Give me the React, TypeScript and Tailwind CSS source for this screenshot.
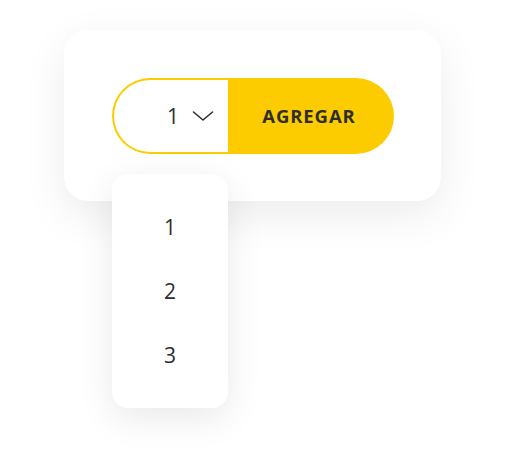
import { useState } from 'react'

const QUANTITIES = [1, 2, 3]

export default function App() {
  const [qty, setQty] = useState(1)

  return (
    <div className="min-h-[474px] w-[506px] bg-white pl-[64px] pt-[30px] font-['Open_Sans',sans-serif] text-[#2e2e2e]">
      <div className="relative h-[171px] w-[377px] rounded-[24px] bg-white pl-[48px] pt-[48px] shadow-[0_14px_44px_rgba(0,0,0,0.08)]">
        <div className="flex h-[76px] w-[282px]">
          <button
            type="button"
            className="flex w-[116px] items-center justify-end gap-[13px] rounded-l-full border-2 border-r-0 border-[#fccc00] bg-white pr-[14px]"
          >
            <span className="text-[21px] leading-none">{qty}</span>
            <svg
              viewBox="0 0 22 12"
              fill="none"
              stroke="#2e2e2e"
              strokeWidth="1.6"
              strokeLinecap="round"
              strokeLinejoin="round"
              className="h-[12px] w-[22px]"
              aria-hidden="true"
            >
              <polyline points="1.5,2 11,10 20.5,2" />
            </svg>
          </button>
          <button
            type="button"
            className="flex flex-1 items-center justify-center rounded-r-full bg-[#fccc00] pr-[4px] text-[18.5px] font-bold tracking-[0.9px] text-[#2e2e2e]"
          >
            AGREGAR
          </button>
        </div>

        {/* open quantity menu */}
        <ul className="absolute left-[48px] top-[144px] w-[116px] rounded-[16px] bg-white pb-[20px] pt-[22px] shadow-[0_10px_36px_rgba(0,0,0,0.09)]">
          {QUANTITIES.map((n) => (
            <li key={n}>
              <button
                type="button"
                onClick={() => setQty(n)}
                className="flex h-16 w-full items-center justify-center text-[21px]"
              >
                {n}
              </button>
            </li>
          ))}
        </ul>
      </div>
    </div>
  )
}
